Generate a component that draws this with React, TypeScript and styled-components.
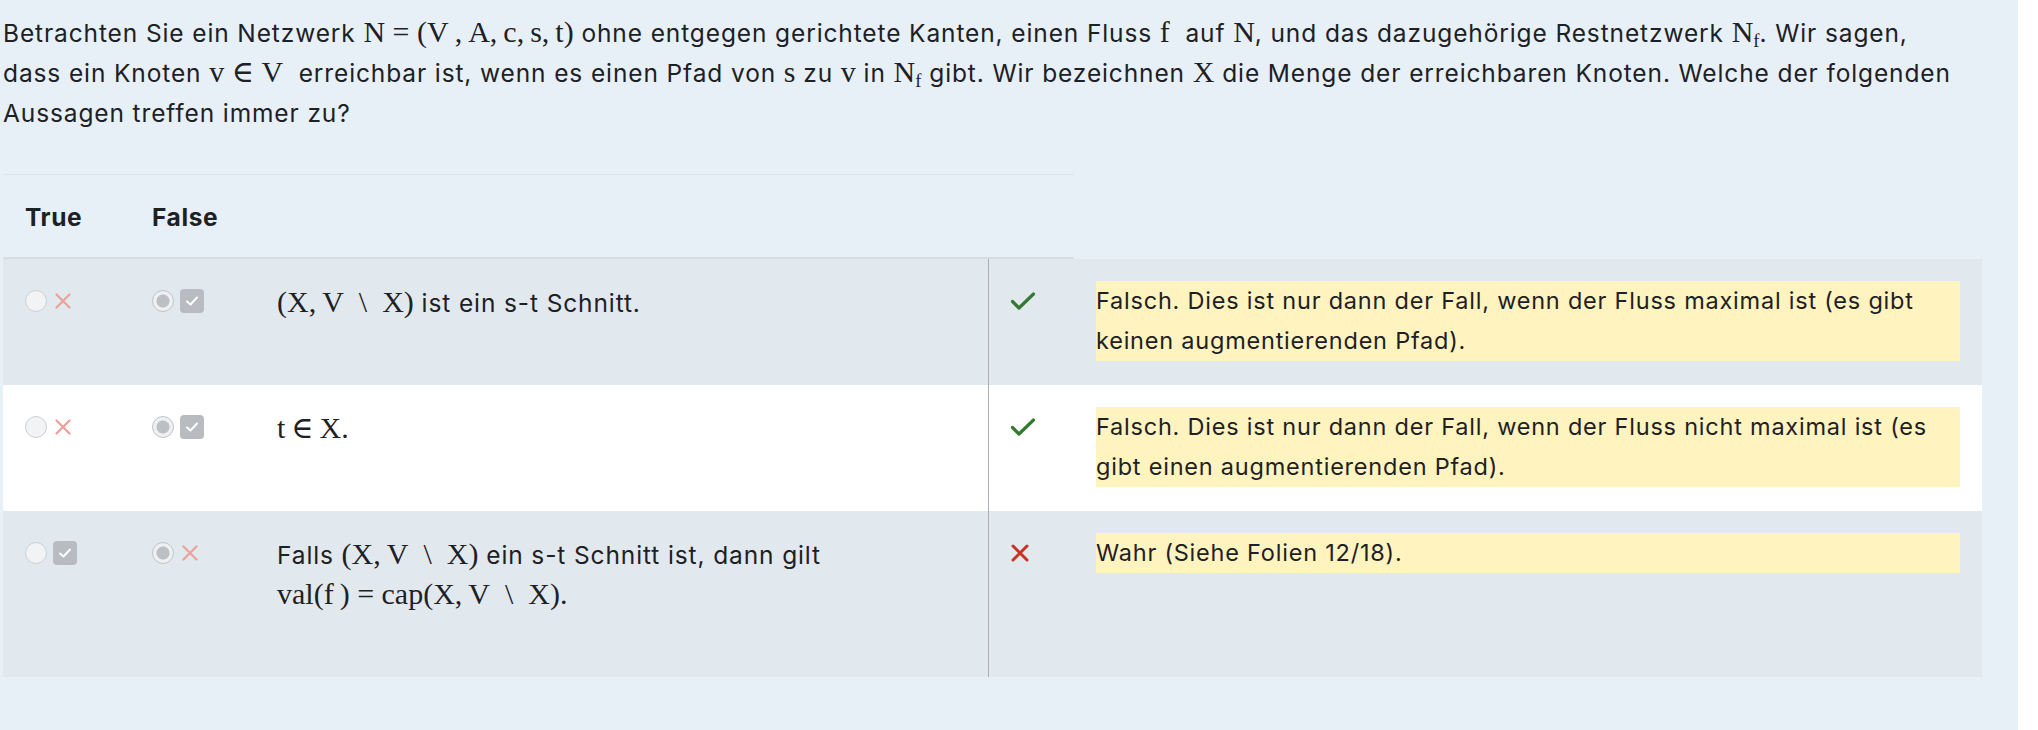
import React from "react";
import styled, { createGlobalStyle } from "styled-components";

const GlobalStyle = createGlobalStyle`
  html, body { margin: 0; padding: 0; background: #ffffff; }
  body { font-family: Inter, "Noto Sans", sans-serif; color: #1d2125; }
`;

const Page = styled.div`
  width: 2018px;
  min-height: 730px;
  box-sizing: border-box;
  background: #e8f0f7;
  padding: 13px 36px 40px 3px;
  font-size: 24.5px;
  letter-spacing: 0.88px;
  line-height: 40px;
`;

const Question = styled.p`
  margin: 0 0 41px;
  white-space: nowrap;
`;

const M = styled.span`
  font-family: "Liberation Serif", "DejaVu Serif", serif;
  font-size: 30px;
  letter-spacing: 0;
  line-height: 1;
  white-space: nowrap;
`;

const Sub = styled.sub`
  font-size: 0.62em;
  line-height: 0;
  vertical-align: -0.28em;
`;

const HeaderRow = styled.div`
  display: grid;
  grid-template-columns: 127px 125px 733px 86px;
  width: 1071px;
  border-top: 1px solid #dde4ea;
  border-bottom: 2px solid #d6dde3;
`;

const HeaderCell = styled.div`
  padding: 22px 22px 20px;
  font-weight: 700;
  font-size: 24.5px;
  letter-spacing: 0.6px;
`;

const Row = styled.div<{ $striped: boolean }>`
  display: grid;
  grid-template-columns: 127px 125px 733px 86px 1fr;
  background: ${(p) => (p.$striped ? "#e2e9ee" : "#ffffff")};
`;

const Cell = styled.div`
  padding: 22px 22px 24px;
`;

const IconCell = styled(Cell)`
  border-left: 1px solid #a9afb5;
  padding-left: 21px;
`;

const ChoiceLine = styled.div`
  display: flex;
  align-items: center;
  gap: 6px;
  height: 40px;
`;

const Statement = styled.p`
  margin: 2px 0 38px;
`;

const Feedback = styled.div`
  background: #fff3bf;
  font-size: 23.5px;
  letter-spacing: 0.78px;
`;

const IconLine = styled.div`
  display: flex;
  align-items: center;
  height: 40px;
`;

const Radio = styled.span<{ $checked?: boolean }>`
  display: inline-block;
  width: 22px;
  height: 22px;
  box-sizing: border-box;
  border-radius: 50%;
  border: 1.5px solid ${(p) => (p.$checked ? "#c0c4c8" : "#cdd1d5")};
  background: ${(p) =>
    p.$checked
      ? "radial-gradient(circle, #bcc0c4 0 6px, #eef0f2 7px)"
      : "#f1f3f5"};
`;

const GreyBox = styled.span`
  display: inline-flex;
  align-items: center;
  justify-content: center;
  width: 24px;
  height: 24px;
  border-radius: 4px;
  background: #b8bcc0;
`;

const FadedCross = () => (
  <svg width="20" height="20" viewBox="0 0 20 20">
    <path d="M3.5 3.5 L16.5 16.5 M16.5 3.5 L3.5 16.5" stroke="#e9a39c" strokeWidth="2.3" strokeLinecap="round" />
  </svg>
);

const GreyCheck = () => (
  <GreyBox>
    <svg width="14" height="12" viewBox="0 0 14 12">
      <path d="M2 6.5 L5.5 9.5 L12 2.5" fill="none" stroke="#ffffff" strokeWidth="2" strokeLinecap="round" strokeLinejoin="round" />
    </svg>
  </GreyBox>
);

const GreenCheck = () => (
  <svg width="26" height="18" viewBox="0 0 26 18">
    <path d="M2.5 9.5 L9 16 L23.5 2" fill="none" stroke="#357a32" strokeWidth="3.2" strokeLinecap="round" strokeLinejoin="round" />
  </svg>
);

const RedCross = () => (
  <svg width="20" height="18" viewBox="0 0 20 18">
    <path d="M3 2 L17 16 M17 2 L3 16" stroke="#ca3120" strokeWidth="3" strokeLinecap="round" />
  </svg>
);

type Mark = "cross" | "check";

type RowData = {
  trueChecked: boolean;
  trueMark?: Mark;
  falseChecked: boolean;
  falseMark?: Mark;
  statement: React.ReactNode;
  correct: boolean;
  feedback: string;
};

const renderMark = (m?: Mark) => (m === "cross" ? <FadedCross /> : m === "check" ? <GreyCheck /> : null);

const XV = () => <>(X,&thinsp;V&nbsp;&nbsp;\&nbsp;&nbsp;X)</>;

const rows: RowData[] = [
  {
    trueChecked: false,
    trueMark: "cross",
    falseChecked: true,
    falseMark: "check",
    statement: (
      <>
        <M>
          <XV />
        </M>{" "}
        ist ein s-t Schnitt.
      </>
    ),
    correct: true,
    feedback:
      "Falsch. Dies ist nur dann der Fall, wenn der Fluss maximal ist (es gibt keinen augmentierenden Pfad).",
  },
  {
    trueChecked: false,
    trueMark: "cross",
    falseChecked: true,
    falseMark: "check",
    statement: (
      <>
        <M>t&thinsp;∈&thinsp;X.</M>
      </>
    ),
    correct: true,
    feedback:
      "Falsch. Dies ist nur dann der Fall, wenn der Fluss nicht maximal ist (es gibt einen augmentierenden Pfad).",
  },
  {
    trueChecked: false,
    trueMark: "check",
    falseChecked: true,
    falseMark: "cross",
    statement: (
      <>
        Falls{" "}
        <M>
          <XV />
        </M>{" "}
        ein s-t Schnitt ist, dann gilt{" "}
        <M>
          val(f&thinsp;) = cap
          <XV />.
        </M>
      </>
    ),
    correct: false,
    feedback: "Wahr (Siehe Folien 12/18).",
  },
];

export default function App() {
  return (
    <>
      <GlobalStyle />
      <Page>
        <Question>
          Betrachten Sie ein Netzwerk <M>N&nbsp;=&nbsp;(V&thinsp;,&thinsp;A,&thinsp;c,&thinsp;s,&thinsp;t)</M> ohne
          entgegen gerichtete Kanten, einen Fluss <M>f</M>&nbsp; auf <M>N</M>, und das dazugehörige Restnetzwerk{" "}
          <M>
            N<Sub>f</Sub>
          </M>
          . Wir sagen,
          <br />
          dass ein Knoten <M>v&nbsp;∈&nbsp;V</M>&nbsp; erreichbar ist, wenn es einen Pfad von <M>s</M> zu <M>v</M> in{" "}
          <M>
            N<Sub>f</Sub>
          </M>{" "}
          gibt. Wir bezeichnen <M>X</M> die Menge der erreichbaren Knoten. Welche der folgenden
          <br />
          Aussagen treffen immer zu?
        </Question>

        <HeaderRow>
          <HeaderCell>True</HeaderCell>
          <HeaderCell>False</HeaderCell>
          <HeaderCell />
          <HeaderCell />
        </HeaderRow>

        {rows.map((r, i) => (
          <Row key={i} $striped={i % 2 === 0}>
            <Cell>
              <ChoiceLine>
                <Radio $checked={r.trueChecked} />
                {renderMark(r.trueMark)}
              </ChoiceLine>
            </Cell>
            <Cell>
              <ChoiceLine>
                <Radio $checked={r.falseChecked} />
                {renderMark(r.falseMark)}
              </ChoiceLine>
            </Cell>
            <Cell>
              <Statement>{r.statement}</Statement>
            </Cell>
            <IconCell>
              <IconLine>{r.correct ? <GreenCheck /> : <RedCross />}</IconLine>
            </IconCell>
            <Cell>
              <Feedback>{r.feedback}</Feedback>
            </Cell>
          </Row>
        ))}
      </Page>
    </>
  );
}
